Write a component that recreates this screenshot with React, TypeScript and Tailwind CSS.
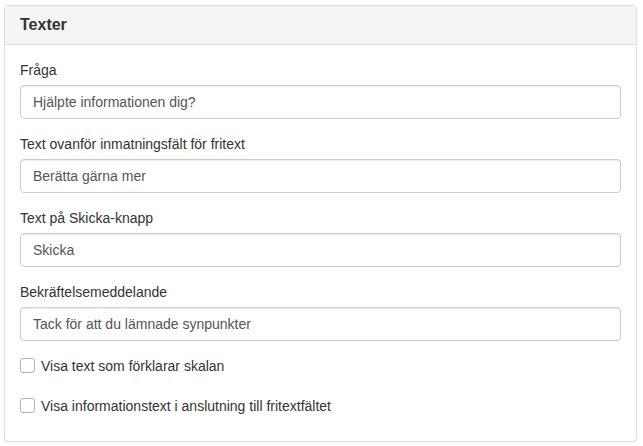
import React from 'react';

const fields = [
    { label: 'Fråga', value: 'Hjälpte informationen dig?' },
    { label: 'Text ovanför inmatningsfält för fritext', value: 'Berätta gärna mer' },
    { label: 'Text på Skicka-knapp', value: 'Skicka' },
    { label: 'Bekräftelsemeddelande', value: 'Tack för att du lämnade synpunkter' },
];

const checks = [
    'Visa text som förklarar skalan',
    'Visa informationstext i anslutning till fritextfältet',
];

export default function App() {
    return (
        <div className="min-h-screen bg-white pt-[5px] pl-[4px] pr-[6px] font-['Liberation_Sans',Arial,sans-serif] text-[14px] text-[#333]">
            <div className="border border-[#ddd] rounded-[4px] bg-white shadow-[0_1px_1px_rgba(0,0,0,0.05)]">
                {/* Heading */}
                <div className="bg-[#f5f5f5] border-b border-[#ddd] rounded-t-[3px] px-[15px] py-[10px]">
                    <h3 className="text-[16px] font-bold leading-[1.1] text-[#333]">Texter</h3>
                </div>

                <div className="p-[15px] pb-[25px]">
                    {fields.map((f) => (
                        <div key={f.label} className="mb-[15px]">
                            <label className="block mb-[5px] leading-[20px]">{f.label}</label>
                            <input
                                type="text"
                                defaultValue={f.value}
                                className="block w-full h-[34px] px-[12px] py-[6px] border border-[#ccc] rounded-[4px] text-[#555] leading-[20px] shadow-[inset_0_1px_1px_rgba(0,0,0,0.075)] outline-none"
                            />
                        </div>
                    ))}

                    <div className="flex flex-col gap-[20px]">
                        {checks.map((c) => (
                            <label key={c} className="flex items-center gap-[6px] leading-[20px]">
                                <span className="w-[15px] h-[15px] border border-[#b5b5b5] rounded-[3px] bg-white shrink-0" />
                                {c}
                            </label>
                        ))}
                    </div>
                </div>
            </div>
        </div>
    );
}
